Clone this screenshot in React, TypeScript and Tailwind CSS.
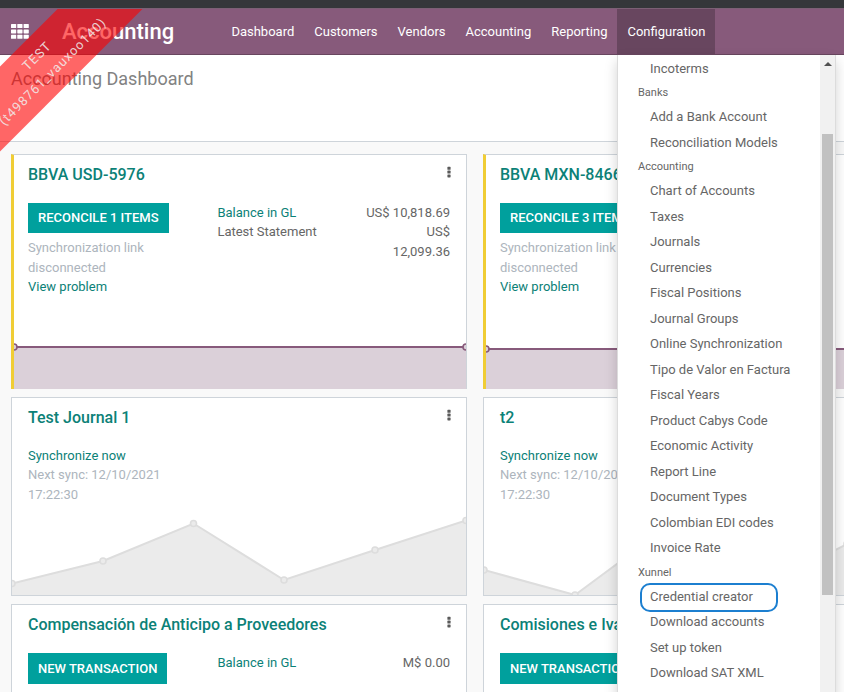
import React from "react";

type Point = [number, number];

const navItems = ["Dashboard", "Customers", "Vendors", "Accounting", "Reporting"];

const menuSections: { title?: string; spacing?: string; items: string[] }[] = [
  { items: ["Incoterms"] },
  { title: "Banks", spacing: "py-[3px]", items: ["Add a Bank Account", "Reconciliation Models"] },
  {
    title: "Accounting",
    spacing: "pt-[3.5px] pb-[3px]",
    items: [
      "Chart of Accounts",
      "Taxes",
      "Journals",
      "Currencies",
      "Fiscal Positions",
      "Journal Groups",
      "Online Synchronization",
      "Tipo de Valor en Factura",
      "Fiscal Years",
      "Product Cabys Code",
      "Economic Activity",
      "Report Line",
      "Document Types",
      "Colombian EDI codes",
      "Invoice Rate",
    ],
  },
  {
    title: "Xunnel",
    spacing: "pt-[4.5px] pb-[2px]",
    items: ["Credential creator", "Download accounts", "Set up token", "Download SAT XML"],
  },
];

function Graph({
  points,
  width,
  height,
  stroke,
  fill,
  dot,
}: {
  points: Point[];
  width: number;
  height: number;
  stroke: string;
  fill: string;
  dot: string;
}) {
  const line = points.map((p) => p.join(",")).join(" ");
  const last = points[points.length - 1][0];
  return (
    <svg width={width} height={height} className="block shrink-0">
      <polygon points={`${points[0][0]},${height} ${line} ${last},${height}`} fill={fill} />
      <polyline points={line} fill="none" stroke={stroke} strokeWidth="2" />
      {points.map(([x, y]) => (
        <circle key={x} cx={x} cy={y} r="3" fill={dot} stroke={stroke} strokeWidth="1.6" />
      ))}
    </svg>
  );
}

function Card({
  title,
  height,
  alert,
  children,
  graph,
}: {
  title: string;
  height: string;
  alert?: boolean;
  children: React.ReactNode;
  graph?: React.ReactNode;
}) {
  return (
    <section
      className={`flex w-[456px] shrink-0 flex-col overflow-hidden bg-white ${height} ${
        alert
          ? "border-t border-r border-l-[3px] border-t-[#ced4da] border-r-[#ced4da] border-l-[#f0cd35]"
          : "border border-[#ced4da]"
      }`}
    >
      <div className={`flex items-start justify-between pr-[15px] pt-[9px] ${alert ? "pl-[14px]" : "pl-4"}`}>
        <h2 className="text-[16px] font-medium leading-[21px] text-[#0c8177]">{title}</h2>
        <svg width="4" height="12" className="mt-[2px]" fill="#5a5a5a">
          <rect width="3.2" height="3" x=".4" y=".8" rx=".6" />
          <rect width="3.2" height="3" x=".4" y="4.6" rx=".6" />
          <rect width="3.2" height="3" x=".4" y="8.4" rx=".6" />
        </svg>
      </div>
      <div className={`flex pr-4 ${alert ? "pl-[14px]" : "pl-4"}`}>{children}</div>
      <div className="mt-auto">{graph}</div>
    </section>
  );
}

function Action({ children, size }: { children: string; size: string }) {
  return (
    <button
      className={`block whitespace-nowrap bg-[#00a09d] px-[10px] text-[13px] font-medium text-white ${size}`}
    >
      {children}
    </button>
  );
}

function BankCard({
  title,
  action,
  y,
  amounts = [],
}: {
  title: string;
  action: string;
  y: number;
  amounts?: string[];
}) {
  return (
    <Card
      title={title}
      height="h-[235px]"
      alert
      graph={
        <Graph
          points={[[0, y], [452, y]]}
          width={452}
          height={50}
          stroke="#875a7b"
          fill="#dbd0d9"
          dot="#dbd0d9"
        />
      }
    >
      <div className="w-[189.4px] pt-[18px]">
        <Action size="h-[30px] leading-[30px]">{action}</Action>
        <p className="mt-[5px] w-[130px] text-[#adb5bd]">Synchronization link disconnected</p>
        <p className="text-[#0c8177]">View problem</p>
      </div>
      {amounts.length > 0 && (
        <div className="flex flex-1 justify-between pt-[17.75px]">
          <div>
            <p className="text-[#0c8177]">Balance in GL</p>
            <p>Latest Statement</p>
          </div>
          <div className="text-right">
            {amounts.map((amount) => (
              <p key={amount}>{amount}</p>
            ))}
          </div>
        </div>
      )}
    </Card>
  );
}

function JournalCard({ title, points }: { title: string; points: Point[] }) {
  return (
    <Card
      title={title}
      height="h-[199px]"
      graph={
        <Graph points={points} width={454} height={90} stroke="#dddddd" fill="#ebebeb" dot="#ebebeb" />
      }
    >
      <div className="w-[150px] pt-[17.75px]">
        <p className="text-[#0c8177]">Synchronize now</p>
        <p className="text-[#adb5bd]">Next sync: 12/10/2021 17:22:30</p>
      </div>
    </Card>
  );
}

function MiscCard({ title, balance }: { title: string; balance?: string }) {
  return (
    <Card title={title} height="h-[150px]">
      <div className="w-[189.4px] pt-[18px]">
        <Action size="h-[31px] leading-[31px]">NEW TRANSACTION</Action>
      </div>
      {balance && (
        <div className="flex flex-1 justify-between pt-[18px]">
          <p className="text-[#0c8177]">Balance in GL</p>
          <p>{balance}</p>
        </div>
      )}
    </Card>
  );
}

function ConfigurationMenu() {
  return (
    <div className="absolute left-[617px] top-[55px] z-10 flex h-[660px] w-[219px] border-x border-[#dcdcdc] bg-white shadow-[0_6px_12px_rgba(0,0,0,0.175)]">
      <div className="flex-1 pt-[1px]">
        {menuSections.map((section) => (
          <div key={section.title ?? "top"}>
            {section.title && (
              <div className={`pl-5 text-[11px] leading-[16.5px] text-[#666] ${section.spacing}`}>
                {section.title}
              </div>
            )}
            {section.items.map((item) => (
              <div key={item} className="relative whitespace-nowrap py-[3px] pl-8 text-[13px] leading-[19.5px]">
                {item}
                {item === "Credential creator" && (
                  <span className="absolute left-[22px] top-[-1px] h-[29px] w-[138px] rounded-[10px] border-2 border-[#1c7fd0]" />
                )}
              </div>
            ))}
          </div>
        ))}
      </div>
      <div className="flex w-[15px] flex-col items-center bg-[#f1f1f1]">
        <svg width="8" height="4" className="mt-[7px]">
          <path d="M0 4L4 0l4 4z" fill="#505050" />
        </svg>
        <div className="mt-[68px] h-[461px] w-[11px] bg-[#c1c1c1]" />
      </div>
    </div>
  );
}

export default function App() {
  return (
    <div className="relative h-[692px] w-[844px] overflow-hidden bg-[#f9f9f9] font-[Roboto,sans-serif] text-[13px] leading-[19.5px] text-[#666]">
      <div className="h-2 bg-[#35373a]" />
      <header className="flex h-[47px] border-b border-t border-b-[#68465f] border-t-[#7c6075] bg-[#875a7b] text-white">
        <svg width="18" height="15" className="ml-[11px] mt-[15px] shrink-0" fill="#fff">
          {[0, 5.4, 10.8].map((y) =>
            [0, 6.3, 12.6].map((x) => (
              <rect key={`${x}-${y}`} x={x} y={y} width="5.2" height="4" rx=".6" />
            )),
          )}
        </svg>
        <div className="ml-[33px] w-[159.4px] text-[22px] font-medium leading-[46px]">Accounting</div>
        <nav className="flex leading-[46px]">
          {navItems.map((item) => (
            <span key={item} className="px-[10px]">
              {item}
            </span>
          ))}
          <span className="bg-[#68465f] px-[10px]">Configuration</span>
        </nav>
      </header>
      <div className="h-[87px] border-b border-[#ced4da] bg-white pl-[11px] pt-[10px] text-[18px] leading-[27px] text-[#828282]">
        Accounting Dashboard
      </div>
      <main className="flex flex-col gap-2 pl-[11px] pt-3">
        <div className="flex gap-4">
          <BankCard
            title="BBVA USD-5976"
            action="RECONCILE 1 ITEMS"
            y={8}
            amounts={["US$ 10,818.69", "US$", "12,099.36"]}
          />
          <BankCard title="BBVA MXN-8466" action="RECONCILE 3 ITEMS" y={10} />
        </div>
        <div className="flex gap-4">
          <JournalCard
            title="Test Journal 1"
            points={[[0, 78.5], [91, 56], [181.5, 18.5], [272, 75], [363, 45], [454, 15.5]]}
          />
          <JournalCard
            title="t2"
            points={[[0, 65], [91, 90], [181.5, 23], [272, 85], [363, 39], [454, 30]]}
          />
        </div>
        <div className="flex gap-4">
          <MiscCard title="Compensación de Anticipo a Proveedores" balance="M$ 0.00" />
          <MiscCard title="Comisiones e Iva" />
        </div>
      </main>
      <ConfigurationMenu />
      <div className="pointer-events-none absolute left-0 top-[9px] z-20 h-[160px] w-[160px] overflow-hidden">
        <div className="absolute left-[-75px] top-[25px] h-[60px] w-[240px] -rotate-45 whitespace-nowrap bg-[rgba(255,0,0,0.6)] pt-2 text-center text-[13px] leading-[22px] tracking-[1px] text-[#f0f0f0]/85">
          TEST
          <br />
          (t498761_vauxoo140)
        </div>
      </div>
    </div>
  );
}
